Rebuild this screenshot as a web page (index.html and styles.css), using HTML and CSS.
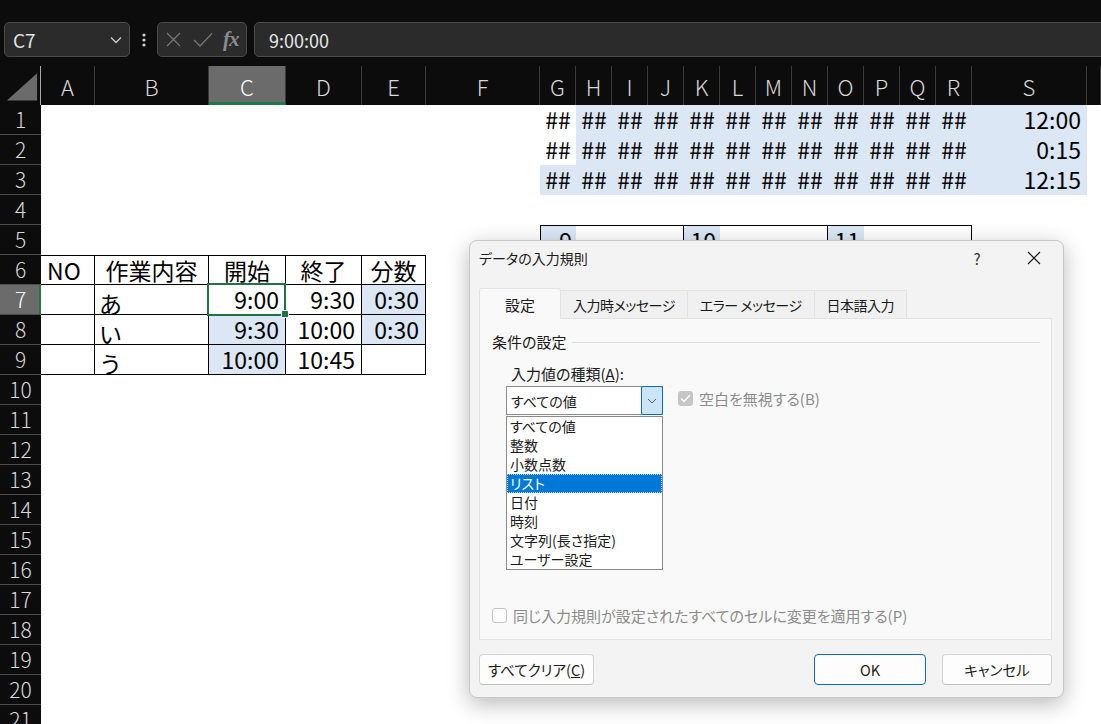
FILE: index.html
```html
<!DOCTYPE html>
<html lang="ja">
  <head>
    <meta charset="UTF-8" />
    <meta name="viewport" content="width=device-width, initial-scale=1.0" />
    <title>データの入力規則</title>
    <link rel="stylesheet" href="styles.css">
  </head>

  <body>
    <div class="ribbon-edge"></div>

    <!-- name box + formula bar -->
    <div class="formula-bar">
      <div class="name-box">
        <span>C7</span>
        <svg width="12" height="8" viewBox="0 0 12 8"><polyline points="1,1.5 6,6.5 11,1.5" fill="none" stroke="#cfcfcf" stroke-width="1.3"/></svg>
      </div>
      <div class="bar-dots">
        <svg width="4" height="14" viewBox="0 0 4 14"><circle cx="2" cy="2" r="1.6" fill="#cfcfcf"/><circle cx="2" cy="7" r="1.6" fill="#cfcfcf"/><circle cx="2" cy="12" r="1.6" fill="#cfcfcf"/></svg>
      </div>
      <div class="fx-box">
        <svg width="15" height="15" viewBox="0 0 15 15"><path d="M1 1 L14 14 M14 1 L1 14" stroke="#767676" stroke-width="1.3"/></svg>
        <svg class="fx-check" width="20" height="15" viewBox="0 0 20 15"><polyline points="1,8 7,14 19,1.5" fill="none" stroke="#767676" stroke-width="1.3"/></svg>
        <span class="fx">fx</span>
      </div>
      <div class="formula-input">9:00:00</div>
    </div>

    <div class="sheet">
      <div class="row col-head">
        <div class="corner">
          <svg width="41" height="39" viewBox="0 0 41 39"><polygon points="7,35 38,35 38,7" fill="#6b6b6b"/></svg>
        </div>
        <div>A</div><div>B</div><div class="on">C</div><div>D</div><div>E</div><div>F</div>
        <div>G</div><div>H</div><div>I</div><div>J</div><div>K</div><div>L</div>
        <div>M</div><div>N</div><div>O</div><div>P</div><div>Q</div><div>R</div>
        <div>S</div><div></div>
      </div>

      <div class="row">
        <div class="rh">1</div>
        <div class="cell hash at-g">##</div>
        <div class="cell hash blue">##</div><div class="cell hash blue">##</div><div class="cell hash blue">##</div>
        <div class="cell hash blue">##</div><div class="cell hash blue">##</div><div class="cell hash blue">##</div>
        <div class="cell hash blue">##</div><div class="cell hash blue">##</div><div class="cell hash blue">##</div>
        <div class="cell hash blue">##</div><div class="cell hash blue">##</div>
        <div class="cell r blue">12:00</div>
      </div>
      <div class="row">
        <div class="rh">2</div>
        <div class="cell hash at-g">##</div>
        <div class="cell hash blue">##</div><div class="cell hash blue">##</div><div class="cell hash blue">##</div>
        <div class="cell hash blue">##</div><div class="cell hash blue">##</div><div class="cell hash blue">##</div>
        <div class="cell hash blue">##</div><div class="cell hash blue">##</div><div class="cell hash blue">##</div>
        <div class="cell hash blue">##</div><div class="cell hash blue">##</div>
        <div class="cell r blue">0:15</div>
      </div>
      <div class="row">
        <div class="rh">3</div>
        <div class="cell hash blue at-g">##</div>
        <div class="cell hash blue">##</div><div class="cell hash blue">##</div><div class="cell hash blue">##</div>
        <div class="cell hash blue">##</div><div class="cell hash blue">##</div><div class="cell hash blue">##</div>
        <div class="cell hash blue">##</div><div class="cell hash blue">##</div><div class="cell hash blue">##</div>
        <div class="cell hash blue">##</div><div class="cell hash blue">##</div>
        <div class="cell r blue">12:15</div>
      </div>
      <div class="row"><div class="rh">4</div></div>
      <div class="row">
        <div class="rh">5</div>
        <div class="cell num blue top lft at-g">9</div>
        <div class="cell span3 top tr"></div>
        <div class="cell num blue top">10</div>
        <div class="cell span3 top tr"></div>
        <div class="cell num blue top">11</div>
        <div class="cell span3 top tr"></div>
      </div>

      <!-- 作業表 -->
      <div class="row">
        <div class="rh">6</div>
        <div class="cell tb top">NO</div>
        <div class="cell tb top c">作業内容</div>
        <div class="cell tb top c">開始</div>
        <div class="cell tb top c">終了</div>
        <div class="cell tb top c">分数</div>
      </div>
      <div class="row">
        <div class="rh on">7</div>
        <div class="cell tb"></div>
        <div class="cell tb kana">あ</div>
        <div class="cell tb r sel">9:00</div>
        <div class="cell tb r">9:30</div>
        <div class="cell tb r blue">0:30</div>
      </div>
      <div class="row">
        <div class="rh">8</div>
        <div class="cell tb"></div>
        <div class="cell tb kana">い</div>
        <div class="cell tb r blue">9:30</div>
        <div class="cell tb r">10:00</div>
        <div class="cell tb r blue">0:30</div>
      </div>
      <div class="row">
        <div class="rh">9</div>
        <div class="cell tb"></div>
        <div class="cell tb kana">う</div>
        <div class="cell tb r blue">10:00</div>
        <div class="cell tb r">10:45</div>
        <div class="cell tb"></div>
      </div>

      <div class="row"><div class="rh">10</div></div>
      <div class="row"><div class="rh">11</div></div>
      <div class="row"><div class="rh">12</div></div>
      <div class="row"><div class="rh">13</div></div>
      <div class="row"><div class="rh">14</div></div>
      <div class="row"><div class="rh">15</div></div>
      <div class="row"><div class="rh">16</div></div>
      <div class="row"><div class="rh">17</div></div>
      <div class="row"><div class="rh">18</div></div>
      <div class="row"><div class="rh">19</div></div>
      <div class="row"><div class="rh">20</div></div>
      <div class="row"><div class="rh">21</div></div>
    </div>

    <!-- データの入力規則 dialog -->
    <div class="dialog">
      <div class="dlg-title">
        <span class="dlg-caption">データの入力規則</span>
        <span class="dlg-help">?</span>
        <span class="dlg-close">
          <svg width="14" height="14" viewBox="0 0 14 14"><path d="M1 1 L13 13 M13 1 L1 13" stroke="#1b1b1b" stroke-width="1.2"/></svg>
        </span>
      </div>

      <div class="tabs">
        <div class="tab on">設定</div>
        <div class="tab">入力時メッセージ</div>
        <div class="tab">エラー メッセージ</div>
        <div class="tab">日本語入力</div>
      </div>

      <div class="panel">
        <div class="group-title">条件の設定</div>
        <div class="field-label">入力値の種類(<u>A</u>):</div>
        <div class="field-row">
          <div class="combo-wrap">
            <div class="combo">
              <span class="combo-text">すべての値</span>
              <span class="combo-btn">
                <svg width="10" height="6" viewBox="0 0 10 6"><polyline points="1,1 5,5 9,1" fill="none" stroke="#5a5a5a" stroke-width="1"/></svg>
              </span>
            </div>
            <div class="list">
              <div>すべての値</div>
              <div>整数</div>
              <div>小数点数</div>
              <div class="on">リスト</div>
              <div>日付</div>
              <div>時刻</div>
              <div>文字列(長さ指定)</div>
              <div>ユーザー設定</div>
            </div>
          </div>
          <label class="opt">
            <span class="check-box checked">
              <svg width="11" height="9" viewBox="0 0 11 9"><polyline points="1,4.5 4,7.5 10,1" fill="none" stroke="#fff" stroke-width="1.3"/></svg>
            </span>
            空白を無視する(B)
          </label>
        </div>
        <label class="opt opt-bottom">
          <span class="check-box"></span>
          同じ入力規則が設定されたすべてのセルに変更を適用する(P)
        </label>
      </div>

      <div class="dlg-buttons">
        <button class="btn btn-clear">すべてクリア(<u>C</u>)</button>
        <button class="btn btn-ok">OK</button>
        <button class="btn btn-cancel">キャンセル</button>
      </div>
    </div>
  </body>
</html>
```

FILE: styles.css
```css
* {
  box-sizing: border-box;
}

body {
  margin: 0;
  width: 1101px;
  height: 724px;
  overflow: hidden;
  position: relative;
  background-color: #0c0c0c;
  font-family: "Noto Sans CJK JP", sans-serif;
}

.ribbon-edge {
  height: 22px;
}

/* formula bar */
.formula-bar {
  display: flex;
  align-items: center;
  height: 35px;
  padding-left: 4px;
  margin-bottom: 9px;
}

.name-box,
.fx-box,
.formula-input {
  height: 35px;
  display: flex;
  align-items: center;
  background-color: #2b2b2b;
  border: 1px solid #4a4a4a;
  border-radius: 5px;
}

.name-box {
  width: 126px;
  justify-content: space-between;
  padding: 0 7px 0 8px;
  color: #e2e2e2;
  font-size: 19px;
}

.bar-dots {
  width: 27px;
  display: flex;
  justify-content: center;
}

.fx-box {
  width: 90px;
  padding-left: 8px;
}
.fx-check {
  margin-left: 12px;
}
.fx {
  margin-left: 10px;
  font-family: "Liberation Serif", serif;
  font-style: italic;
  font-weight: 700;
  font-size: 21px;
  color: #8c8c8c;
  letter-spacing: -1px;
}

.formula-input {
  flex: 1;
  margin-left: 7px;
  margin-right: -10px;
  padding-left: 14px;
  color: #e6e6e6;
  font-size: 18px;
}

/* sheet */
.row {
  display: grid;
  grid-template-columns: 41px 54px 114px 77px 76px 64px 114px repeat(12, 36px) 115px 1fr;
  grid-template-rows: 30px;
  height: 30px;
  background-color: #fff;
}

.col-head {
  grid-template-rows: 39px;
  height: 39px;
  background-color: #0c0c0c;
}
.col-head > div {
  display: flex;
  align-items: center;
  justify-content: center;
  color: #d9d9d9;
  font-size: 22px;
  font-weight: 300;
  border-right: 1px solid #3a3a3a;
}
.col-head .corner {
  border-right-color: #a8a8a8;
}
.col-head .on {
  background-color: #6b6b6b;
  color: #fff;
  border-bottom: 3px solid #1f7a47;
  padding-top: 3px;
}

.rh {
  background-color: #0c0c0c;
  color: #d9d9d9;
  border-bottom: 1px solid #4b4b4b;
  text-align: center;
  font-size: 21px;
  font-weight: 300;
  line-height: 29px;
}
.rh.on {
  background-color: #6b6b6b;
  color: #fff;
  box-shadow: inset -2px 0 #1f7a47;
}

.cell {
  font-size: 23px;
  line-height: 29px;
  color: #000;
  padding: 0 6px;
  white-space: nowrap;
}
.cell.r {
  text-align: right;
}
.cell.c {
  text-align: center;
  padding: 0;
}
.cell.kana {
  padding: 4px 0 0 4px;
}
.cell.hash {
  text-align: center;
  padding: 0;
}
.cell.num {
  text-align: right;
  padding: 0 4px;
}

.at-g {
  grid-column-start: 8;
}
.span3 {
  grid-column: span 3;
}

.blue {
  background-color: #dbe7f5;
}
.tb {
  border-right: 1px solid #000;
  border-bottom: 1px solid #000;
}
.top {
  border-top: 1px solid #000;
}
.lft {
  border-left: 1px solid #000;
}
.tr {
  border-right: 1px solid #000;
}

.sel {
  position: relative;
}
.sel::after {
  content: "";
  position: absolute;
  left: -2px;
  top: -2px;
  right: -1px;
  bottom: -2px;
  border: 2px solid #1f7244;
}
.sel::before {
  content: "";
  position: absolute;
  right: -4px;
  bottom: -4px;
  width: 6px;
  height: 6px;
  background-color: #1f7244;
  border: 1px solid #fff;
  z-index: 1;
}

/* dialog */
.dialog {
  position: absolute;
  left: 469px;
  top: 240px;
  width: 595px;
  background-color: #f3f3f3;
  border: 1px solid #c8c8c8;
  border-radius: 8px;
  box-shadow: 0 6px 22px rgba(0, 0, 0, 0.28);
  color: #1b1b1b;
  font-family: "Noto Sans CJK JP", sans-serif;
  font-feature-settings: "palt";
}

.dlg-title {
  height: 34px;
  display: flex;
  align-items: center;
  padding-left: 9px;
  font-size: 14px;
}
.dlg-caption {
  flex: 1;
}
.dlg-help {
  width: 20px;
  text-align: center;
  margin-right: 39px;
  font-size: 15px;
  color: #333;
}
.dlg-close {
  width: 16px;
  margin-right: 21px;
  display: flex;
  justify-content: center;
}

.tabs {
  display: flex;
  align-items: flex-end;
  height: 31px;
  margin: 12px 0 0 9px;
}
.tab {
  height: 28px;
  padding: 0 12px;
  display: flex;
  align-items: center;
  font-size: 14px;
  letter-spacing: -0.5px;
  background-color: #f0f0f0;
  border: 1px solid #e2e2e2;
  border-bottom: none;
  margin-left: -1px;
}
.tab:first-child {
  margin-left: 0;
}
.tab.on {
  height: 31px;
  padding: 0 25px;
  margin-bottom: -1px;
  font-size: 15px;
  letter-spacing: 0;
  background-color: #f9f9f9;
  border-radius: 3px 3px 0 0;
  position: relative;
  z-index: 1;
}

.panel {
  height: 322px;
  margin: 0 11px 0 9px;
  padding: 13px 11px 0 12px;
  background-color: #f9f9f9;
  border: 1px solid #e2e2e2;
  display: flex;
  flex-direction: column;
}

.group-title {
  display: flex;
  align-items: center;
  gap: 6px;
  font-size: 15px;
  line-height: 20px;
}
.group-title::after {
  content: "";
  flex: 1;
  height: 1px;
  background-color: #dcdcdc;
}

.field-label {
  margin: 12px 0 0 19px;
  font-size: 15px;
  line-height: 20px;
}

.field-row {
  display: flex;
  align-items: flex-start;
  margin: 2px 0 0 14px;
}

.combo-wrap {
  width: 157px;
}
.combo {
  height: 29px;
  display: flex;
  align-items: stretch;
  background-color: #fff;
  border: 1px solid #8a8a8a;
  font-size: 14px;
}
.combo-text {
  flex: 1;
  padding-left: 4px;
  display: flex;
  align-items: center;
}
.combo-btn {
  width: 22px;
  margin: -1px -1px -1px 0;
  display: flex;
  align-items: center;
  justify-content: center;
  background-color: #cce4f7;
  border: 1px solid #0f6cbd;
  border-radius: 2px;
}

.list {
  margin-top: 1px;
  background-color: #fff;
  border: 1px solid #8a8a8a;
}
.list div {
  height: 19px;
  line-height: 19px;
  padding-left: 3px;
  font-size: 14px;
}
.list .on {
  background-color: #0078d7;
  color: #fff;
  outline: 1px dotted #b9d6f3;
  outline-offset: -1px;
}

.opt {
  display: flex;
  align-items: center;
  gap: 6px;
  height: 20px;
  margin: 2px 0 0 15px;
  color: #8c8c8c;
  font-size: 15px;
}
.opt-bottom {
  margin: auto 0 14px 0;
}

.check-box {
  width: 15px;
  height: 15px;
  border-radius: 3px;
  border: 1px solid #c4c4c4;
  background-color: #fdfdfd;
  display: flex;
  align-items: center;
  justify-content: center;
}
.check-box.checked {
  border-color: #c6c6c6;
  background-color: #c6c6c6;
}

.dlg-buttons {
  display: flex;
  margin: 14px 11px 12px 9px;
}
.btn {
  height: 31px;
  padding: 0;
  display: flex;
  align-items: center;
  justify-content: center;
  background-color: #fdfdfd;
  border: 1px solid #d3d3d3;
  border-bottom-color: #c0c0c0;
  border-radius: 4px;
  color: #1b1b1b;
  font-family: "Noto Sans CJK JP", sans-serif;
  font-feature-settings: "palt";
  font-size: 14.5px;
}
.btn-clear {
  width: 115px;
}
.btn-ok {
  width: 112px;
  margin-left: auto;
  border-color: #0f6cbd;
}
.btn-cancel {
  width: 110px;
  margin-left: 16px;
}
```
